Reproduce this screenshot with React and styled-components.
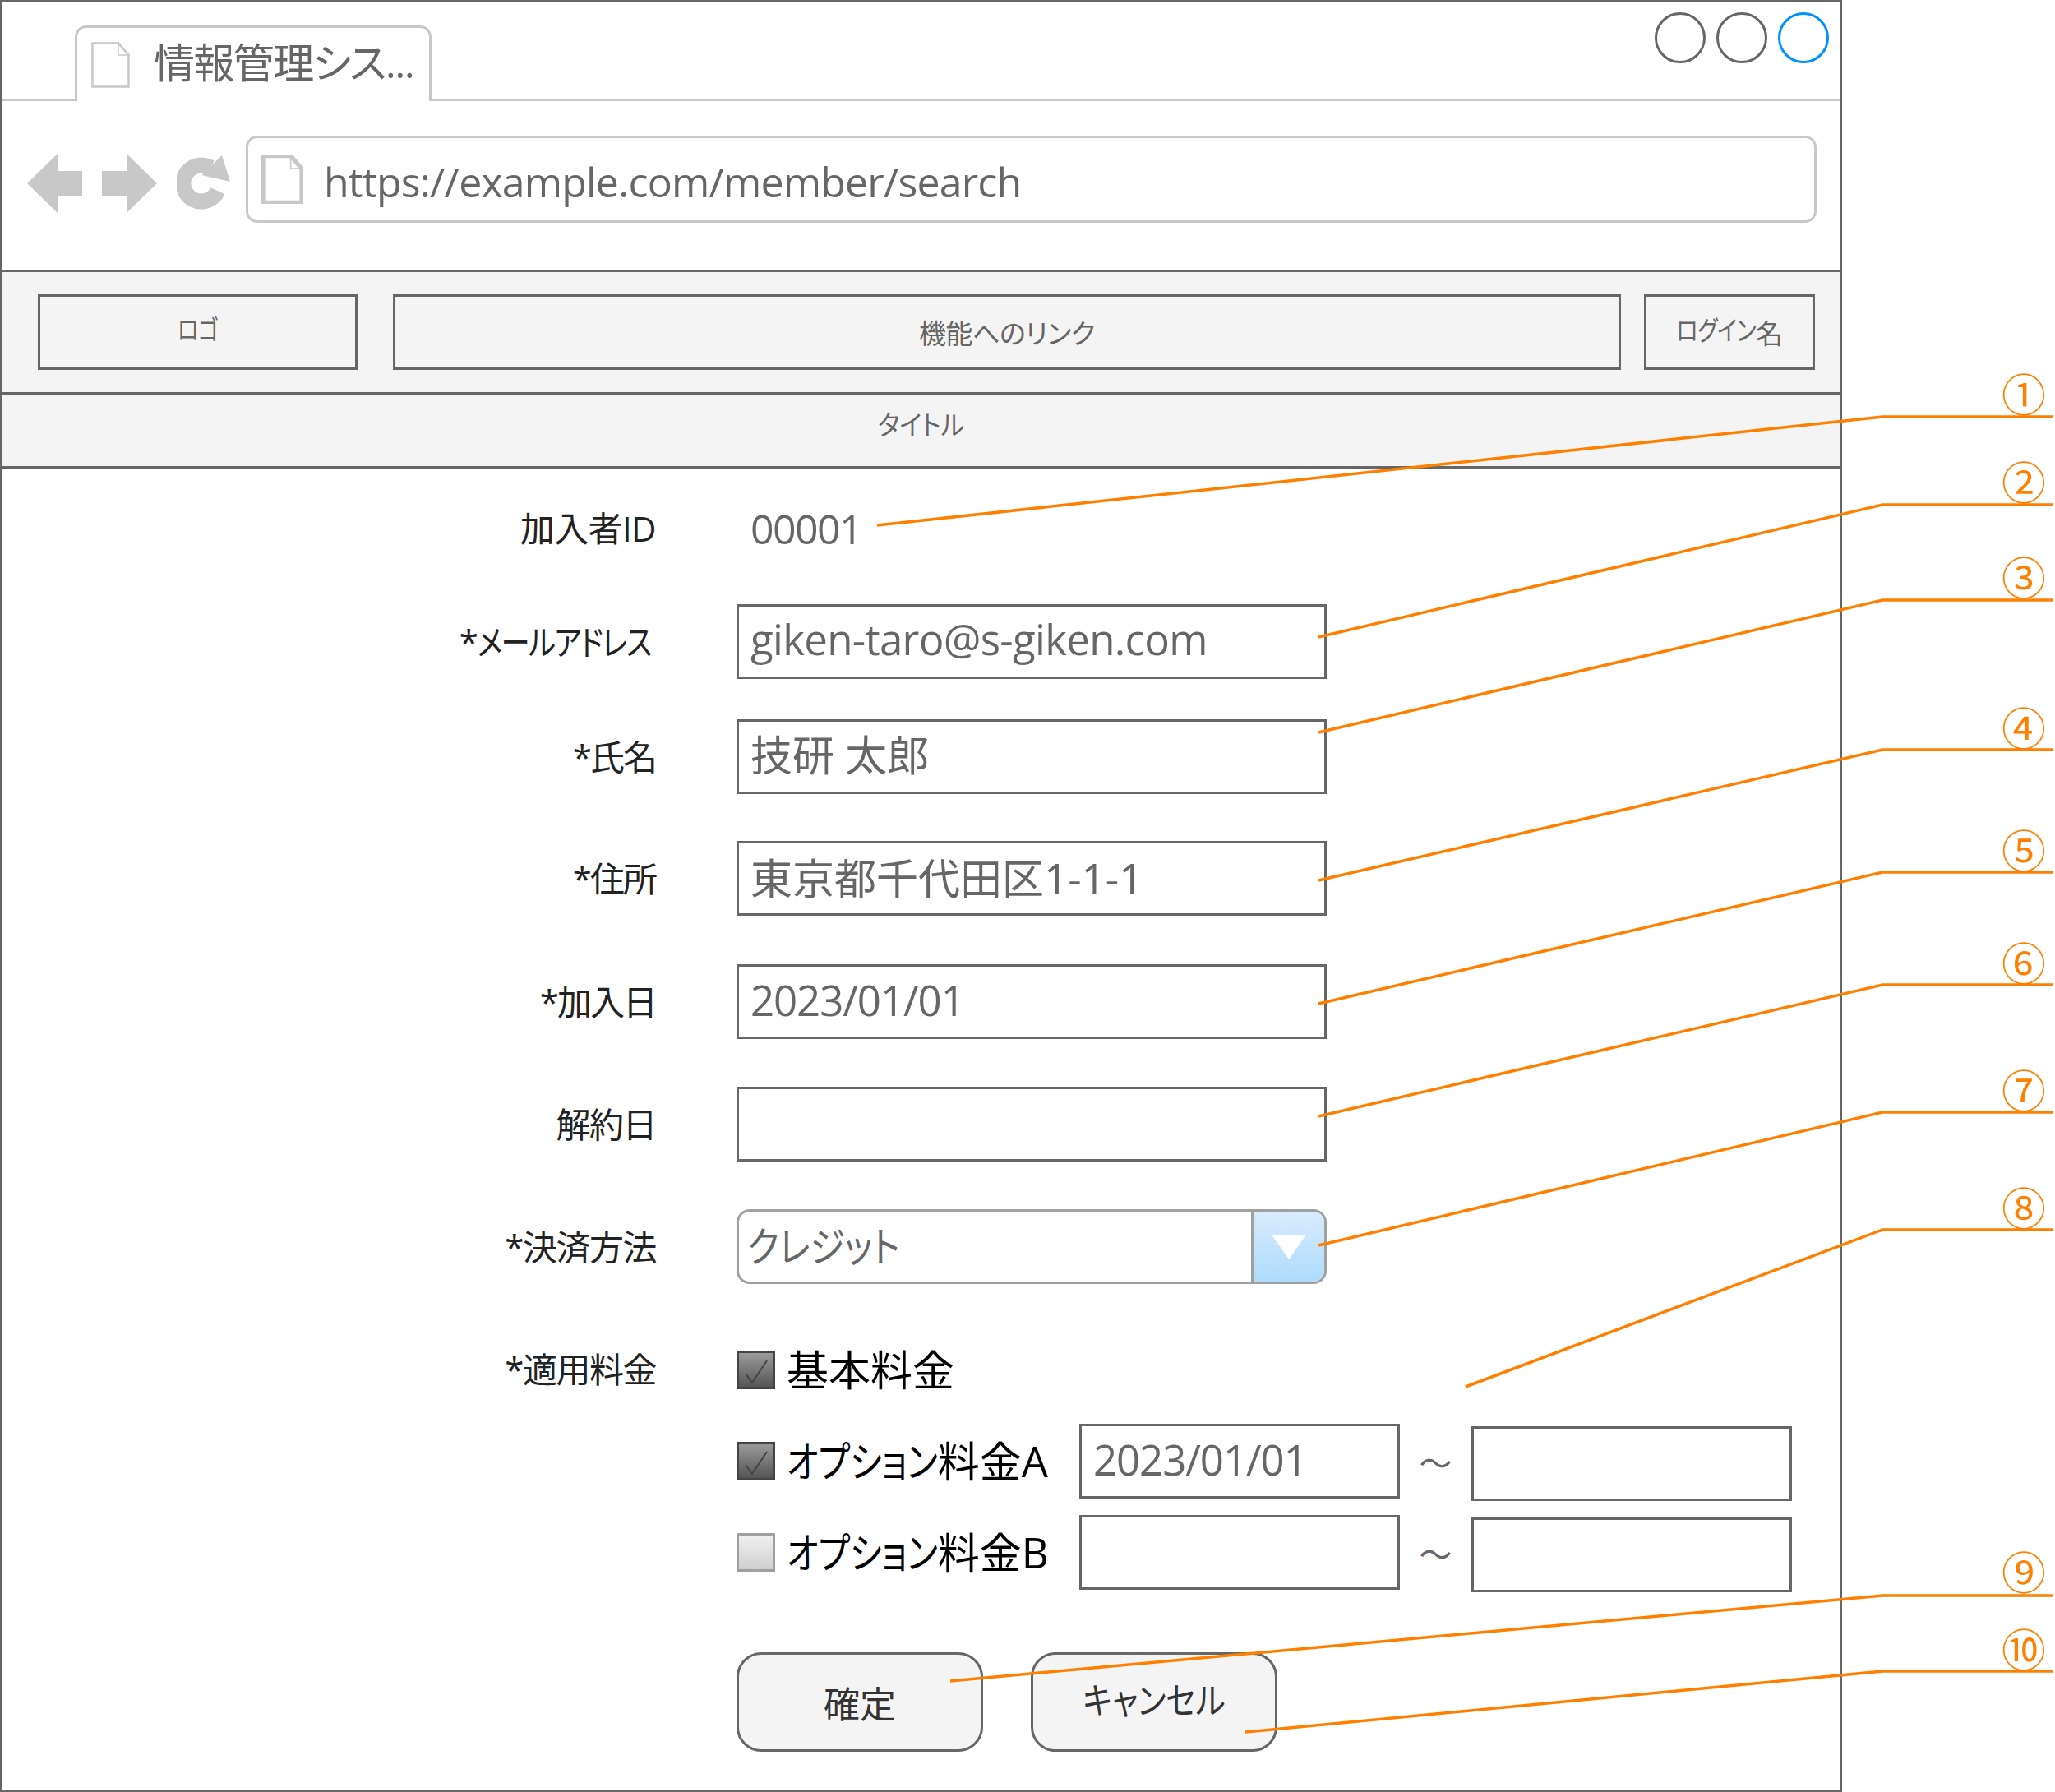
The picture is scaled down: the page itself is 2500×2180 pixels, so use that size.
import React from 'react'
import styled, { createGlobalStyle } from 'styled-components'

const FONT = `"Open Sans", "Noto Sans CJK JP", sans-serif`
const GREY = '#666666'
const LIGHT = '#c8c8c8'

const GlobalStyle = createGlobalStyle`
  html, body {
    margin: 0;
    padding: 0;
    background: #ffffff;
  }
  body {
    font-family: ${FONT};
    font-feature-settings: "palt";
    color: ${GREY};
  }
  * {
    box-sizing: border-box;
  }
`

const CALLOUTS = [
  { mark: '①', top: 480, points: '2498,507 2290,507 1067,639' },
  { mark: '②', top: 587, points: '2498,614 2290,614 1604,775' },
  { mark: '③', top: 703, points: '2498,730 2290,730 1604,891' },
  { mark: '④', top: 886, points: '2498,912 2290,912 1604,1071' },
  { mark: '⑤', top: 1035, points: '2498,1061 2290,1061 1604,1221' },
  { mark: '⑥', top: 1172, points: '2498,1198 2290,1198 1604,1358' },
  { mark: '⑦', top: 1327, points: '2498,1353 2290,1353 1604,1515' },
  { mark: '⑧', top: 1470, points: '2498,1496 2290,1496 1783,1687' },
  { mark: '⑨', top: 1913, points: '2498,1941 2290,1941 1156,2045' },
  { mark: '⑩', top: 2007, points: '2498,2033 2290,2033 1515,2107' }
]

const DocIcon = ({ width, height, stroke }) => (
  <svg width={width} height={height} viewBox="0 0 47 56" fill="none">
    <path
      d="M1.5 1.5H33L45.5 16V54.5H1.5Z"
      fill="#fff"
      stroke={LIGHT}
      strokeWidth={stroke}
    />
    <path d="M33 1.5V16H45.5" stroke={LIGHT} strokeWidth="1.5" />
  </svg>
)

const BackIcon = () => (
  <svg width="67" height="72" viewBox="0 0 67 72">
    <path d="M0 36L37 0V21H67V51H37V72Z" fill={LIGHT} />
  </svg>
)

const ForwardIcon = () => (
  <svg width="67" height="72" viewBox="0 0 67 72">
    <path d="M67 36L30 0V21H0V51H30V72Z" fill={LIGHT} />
  </svg>
)

const ReloadIcon = () => (
  <svg width="66" height="68" viewBox="0 0 66 68" fill="none">
    <path d="M49.9 43.3A22 22 0 1 1 41 15" stroke={LIGHT} strokeWidth="19" />
    <path d="M55 0L65 32L30.5 24Z" fill={LIGHT} />
  </svg>
)

const CheckIcon = () => (
  <svg width="41" height="41" viewBox="0 0 41 41" fill="none">
    <path d="M8 25L16 36L34 9" stroke="#444" strokeWidth="2" />
  </svg>
)

const App = () => (
  <Page>
    <GlobalStyle />
    <Browser>
      <TabBar>
        <Tab>
          <DocIcon width={47} height={56} stroke={2.5} />
          <TabTitle>情報管理シス...</TabTitle>
        </Tab>
        <WindowButtons>
          <WindowButton />
          <WindowButton />
          <WindowButton $active />
        </WindowButtons>
      </TabBar>

      <Toolbar>
        <NavIcons>
          <BackIcon />
          <ForwardIcon />
          <ReloadIcon />
        </NavIcons>
        <UrlBar>
          <DocIcon width={51} height={60} stroke={5} />
          <UrlText>https://example.com/member/search</UrlText>
        </UrlBar>
      </Toolbar>

      <NavBand>
        <NavBox $width={389}>
          <Kana $x={0.8}>ロゴ</Kana>
        </NavBox>
        <NavBox $width={1494} $gap={28}>
          機能へのリンク
        </NavBox>
        <NavBox $width={208}>
          <Kana $x={0.82}>ログイン</Kana>名
        </NavBox>
      </NavBand>
      <TitleBand>
        <Kana $x={0.92}>タイトル</Kana>
      </TitleBand>

      <Form>
        <Row $top={27}>
          <Label $spacing={-0.6}>加入者ID</Label>
          <PlainValue>00001</PlainValue>
        </Row>
        <Row $top={47}>
          <Label $inset={7}>
            *<Kana $x={0.84}>メールアドレス</Kana>
          </Label>
          <TextBox $spacing={-0.7} $lift={8}>
            giken-taro@s-giken.com
          </TextBox>
        </Row>
        <Row $top={49}>
          <Label $spacing={-2}>*氏名</Label>
          <TextBox $lift={10}>技研 太郎</TextBox>
        </Row>
        <Row $top={57}>
          <Label $spacing={-2}>*住所</Label>
          <TextBox>東京都千代田区1-1-1</TextBox>
        </Row>
        <Row $top={59}>
          <Label $spacing={-2}>*加入日</Label>
          <TextBox $spacing={-1.1}>2023/01/01</TextBox>
        </Row>
        <Row $top={58}>
          <Label>解約日</Label>
          <TextBox />
        </Row>
        <Row $top={58}>
          <Label>*決済方法</Label>
          <Select>
            <SelectText>
              <Kana $x={0.86}>クレジット</Kana>
            </SelectText>
            <SelectArrow />
          </Select>
        </Row>
        <FeeRow $top={59}>
          <Label>*適用料金</Label>
          <FeeList>
            <FeeItem>
              <Check $checked>
                <CheckIcon />
              </Check>
              <FeeName>基本料金</FeeName>
            </FeeItem>
            <FeeItem>
              <Check $checked>
                <CheckIcon />
              </Check>
              <FeeName>
                <Kana $x={0.82}>オプション</Kana>料金A
              </FeeName>
              <DateBox $spacing={-1.1}>2023/01/01</DateBox>
              <Tilde>～</Tilde>
              <DateEnd />
            </FeeItem>
            <FeeItem>
              <Check />
              <FeeName>
                <Kana $x={0.82}>オプション</Kana>料金B
              </FeeName>
              <DateBox />
              <Tilde>～</Tilde>
              <DateEnd />
            </FeeItem>
          </FeeList>
        </FeeRow>
        <Buttons>
          <Button>確定</Button>
          <Button>
            <Kana $x={0.87}>キャンセル</Kana>
          </Button>
        </Buttons>
      </Form>
    </Browser>

    <Leaders viewBox="0 0 2500 2180" fill="none">
      {CALLOUTS.map(c => (
        <polyline key={c.mark} points={c.points} stroke="#ff8000" strokeWidth="3.5" />
      ))}
    </Leaders>
    {CALLOUTS.map(c => (
      <Mark key={c.mark} $top={c.top}>
        {c.mark}
      </Mark>
    ))}
  </Page>
)

const Page = styled('div')`
  position: relative;
  width: 2500px;
  height: 2180px;
  overflow: hidden;
`

const Browser = styled('div')`
  width: 2241px;
  height: 2180px;
  border: 3px solid ${GREY};
`

// condensed katakana: smaller type stretched back up to the line's height
const Kana = styled('span')`
  display: inline-block;
  font-size: ${props => props.$x}em;
  line-height: 1;
  transform: scaleY(${props => 1 / props.$x});
  transform-origin: 50% 90%;
`

const TabBar = styled('div')`
  display: flex;
  height: 120px;
  padding-left: 88px;
  border-bottom: 3px solid ${LIGHT};
`

const Tab = styled('div')`
  display: flex;
  gap: 29px;
  width: 434px;
  height: 92px;
  margin-top: 28px;
  padding: 17px 0 0 17px;
  background: #ffffff;
  border: 3px solid ${LIGHT};
  border-bottom: none;
  border-radius: 14px 14px 0 0;
`

const TabTitle = styled('div')`
  margin-top: -3px;
  font-size: 50px;
  line-height: 56px;
  letter-spacing: -1.6px;
  white-space: nowrap;
`

const WindowButtons = styled('div')`
  display: flex;
  gap: 13px;
  margin: 12px 13px 0 auto;
`

const WindowButton = styled('div')`
  width: 62px;
  height: 62px;
  border-radius: 50%;
  border: 3px solid ${props => (props.$active ? '#0090ff' : GREY)};
`

const Toolbar = styled('div')`
  display: flex;
  height: 205px;
  padding: 42px 0 0 30px;
`

const NavIcons = styled('div')`
  display: flex;
  align-items: center;
  gap: 24px;
  height: 72px;
  margin-top: 22px;
  margin-right: 18px;
`

const UrlBar = styled('div')`
  display: flex;
  align-items: center;
  gap: 25px;
  width: 1911px;
  height: 106px;
  padding: 0 0 0 16px;
  border: 3px solid ${LIGHT};
  border-radius: 14px;
`

const UrlText = styled('div')`
  padding-top: 6px;
  font-size: 50px;
  letter-spacing: -0.8px;
  white-space: nowrap;
`

const NavBand = styled('div')`
  display: flex;
  height: 152px;
  padding: 27px 0 0 43px;
  background: #f4f4f4;
  border-top: 3px solid ${GREY};
  border-bottom: 3px solid ${GREY};
`

const NavBox = styled('div')`
  display: flex;
  flex: none;
  align-items: center;
  justify-content: center;
  width: ${props => props.$width}px;
  height: 92px;
  margin-right: ${props => props.$gap || 43}px;
  padding-bottom: 1px;
  border: 3px solid ${GREY};
  font-size: 33px;
  letter-spacing: -0.5px;
`

const TitleBand = styled('div')`
  height: 90px;
  padding-top: 14px;
  text-align: center;
  font-size: 33px;
  line-height: 46px;
  background: #f4f4f4;
  border-bottom: 3px solid ${GREY};
`

const Form = styled('div')`
  display: flex;
  flex-direction: column;
`

const Row = styled('div')`
  display: grid;
  grid-template-columns: 796px 718px;
  column-gap: 97px;
  align-items: center;
  height: 91px;
  margin-top: ${props => props.$top}px;
`

const FeeRow = styled(Row)`
  align-items: start;
  height: auto;
`

const Label = styled('div')`
  padding-right: ${props => props.$inset || 1}px;
  text-align: right;
  font-size: 42px;
  line-height: 90px;
  letter-spacing: ${props => (props.$spacing === undefined ? -1.5 : props.$spacing)}px;
  color: #222222;
  white-space: nowrap;
`

const PlainValue = styled('div')`
  padding-left: 17px;
  font-size: 50px;
  letter-spacing: -1.6px;
`

const TextBox = styled('div')`
  display: flex;
  align-items: center;
  height: 91px;
  padding: 0 0 ${props => props.$lift || 5}px 14px;
  font-size: 51px;
  letter-spacing: ${props => props.$spacing || 0}px;
  white-space: nowrap;
  background: #ffffff;
  border: 3px solid ${GREY};
`

const Select = styled('div')`
  display: flex;
  height: 91px;
  background: #ffffff;
  border: 3px solid #a0a0a0;
  border-radius: 16px;
  overflow: hidden;
`

const SelectText = styled('div')`
  flex: 1;
  padding-left: 10px;
  font-size: 50px;
  line-height: 84px;
`

const SelectArrow = styled('div')`
  position: relative;
  width: 89px;
  background: linear-gradient(#d8ebfd, #aedcfd);
  border-left: 3px solid #a0a0a0;
  &::after {
    content: '';
    position: absolute;
    left: 22px;
    top: 28px;
    border-left: 21px solid transparent;
    border-right: 21px solid transparent;
    border-top: 30px solid #ffffff;
  }
`

const FeeList = styled('div')`
  display: flex;
  flex-direction: column;
  gap: 20px;
  width: 1284px;
`

const FeeItem = styled('div')`
  display: flex;
  align-items: center;
  height: 91px;
`

const Check = styled('div')`
  flex: none;
  width: 47px;
  height: 47px;
  background: ${props =>
    props.$checked
      ? 'linear-gradient(#9a9a9a, #555555)'
      : 'linear-gradient(#f0f0f0, #d0d0d0)'};
  border: 3px solid ${props => (props.$checked ? '#444444' : '#a0a0a0')};
`

const FeeName = styled('div')`
  width: 356px;
  margin-left: 14px;
  padding-bottom: 5px;
  font-size: 51px;
  color: #000000;
  white-space: nowrap;
`

const DateBox = styled(TextBox)`
  width: 390px;
`

const DateEnd = styled(TextBox)`
  width: 390px;
  margin-top: 5px;
`

const Tilde = styled('div')`
  width: 87px;
  text-align: center;
  font-size: 40px;
`

const Buttons = styled('div')`
  display: flex;
  gap: 58px;
  margin: 76px 0 0 893px;
`

const Button = styled('div')`
  display: flex;
  align-items: center;
  justify-content: center;
  width: 300px;
  height: 121px;
  font-size: 44px;
  color: #333333;
  background: #f4f4f4;
  border: 3px solid ${GREY};
  border-radius: 30px;
`

const Leaders = styled('svg')`
  position: absolute;
  left: 0;
  top: 0;
  width: 2500px;
  height: 2180px;
`

const Mark = styled('div')`
  position: absolute;
  left: 2426px;
  top: ${props => props.$top - 36}px;
  width: 72px;
  text-align: center;
  font-size: 54px;
  line-height: 72px;
  color: #ff8000;
`

export default App
